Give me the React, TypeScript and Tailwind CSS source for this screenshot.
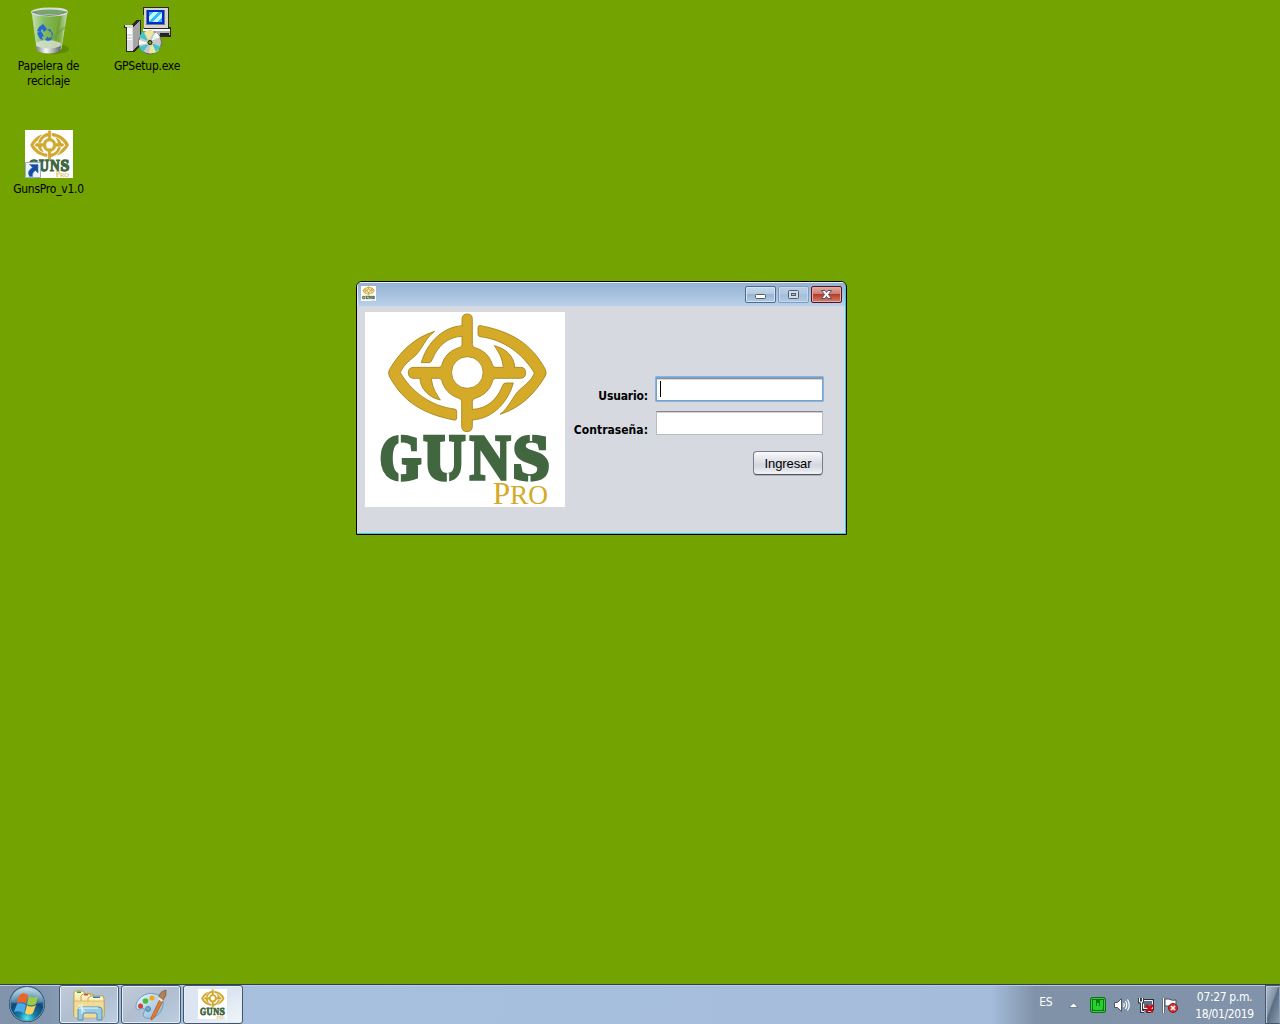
import React from "react";

const ui = "font-['DejaVu_Sans_Condensed','Noto_Sans',sans-serif]";

function Half() {
  return (
    <g>
      <path d="M224 79C196 99 186 134 165 153C143 171 129 183 121 203C154 259 212 304 284 312Q290 313 290 319V339Q290 347 282 345C190 327 130 292 88 214Q83 203 88 194C119 142 160 99 224 79Z" />
      <path d="M184 173C198 122 240 67 306 62V94C263 96 234 122 217 163Q214 173 207 173Z" />
      <path d="M180 219C180 250 205 277 241 285C224 260 217 245 214 219Z" />
    </g>
  );
}

function Logo({ className, small = false, title }: { className: string; small?: boolean; title?: string }) {
  return (
    <svg className={className} viewBox="15 21 600 585" preserveAspectRatio="none" overflow="visible" role="img" aria-label={title}>
      <rect x="15" y="21" width="600" height="585" fill="#fff" />
      <g fill="#d4aa28" stroke={small ? "#c09622" : "#a48119"} strokeWidth={small ? 6 : 2.5} strokeLinejoin="round">
        <Half />
        <g transform="rotate(180 322 203.500)"><Half /></g>
        <path fillRule="evenodd" d="M306 43Q306 27 322 27Q337 27 337 43V119Q338 126 345 128C373 136 390 154 398 181Q400 187 407 187H481Q497 187 497 203Q497 220 481 220H407Q400 220 398 227C390 255 372 272 345 280Q337 282 337 290V363Q337 380 321 380Q305 380 305 363V290Q305 282 297 280C270 271 252 253 245 226Q243 220 236 220H162Q145 220 145 203Q145 187 162 187H236Q243 187 245 181C253 153 270 136 297 128Q306 126 306 119ZM322 155A47 47 0 1 0 322 250A47 47 0 1 0 322 155Z" />
        <path stroke="none" d="M182 190h32v34h-32zM430 183h32v34h-32zM310 64h-14v28h14zM333 314h14v29h-14z" />
      </g>
      <g fill="#426740" stroke="#426740" fontFamily="'Liberation Serif',serif" fontWeight="700" fontSize="192" strokeWidth={small ? 17 : 13}>
        <text x="59" y="522" textLength="124" lengthAdjust="spacingAndGlyphs">G</text>
        <text x="191" y="522" textLength="124" lengthAdjust="spacingAndGlyphs">U</text>
        <text x="329" y="522" textLength="122" lengthAdjust="spacingAndGlyphs" strokeWidth={small ? 14 : 10}>N</text>
        <text x="458" y="522" textLength="110" lengthAdjust="spacingAndGlyphs">S</text>
      </g>
      {!small && (
        <g stroke="#fff" strokeWidth="7" fill="none">
          <path d="M119 384V418M119 500V536M264 505V536M513 384V408M508 512V536" />
        </g>
      )}
      <text x="398" y="597" fill="#d4aa28" fontFamily="'Liberation Serif',serif" fontSize={small ? 98 : 94}>P<tspan fontSize="82">RO</tspan></text>
    </svg>
  );
}

function RecycleBin() {
  return (
    <svg className="h-12 w-12" viewBox="0 0 48 48">
      <defs>
        <linearGradient id="bin"><stop stopColor="#d4ecd0" stopOpacity=".85" /><stop offset=".35" stopColor="#8ac078" stopOpacity=".8" /><stop offset=".75" stopColor="#79ad4c" stopOpacity=".7" /><stop offset="1" stopColor="#c8dfbb" stopOpacity=".9" /></linearGradient>
        <linearGradient id="base"><stop stopColor="#777e80" /><stop offset=".4" stopColor="#f9fafa" /><stop offset="1" stopColor="#5a6369" /></linearGradient>
      </defs>
      <ellipse cx="29" cy="42" rx="15" ry="5" fill="#477200" opacity=".5" />
      <path d="M7 5L12 42Q24 48 36 42L42 5Z" fill="url(#bin)" stroke="#c8dec0" strokeWidth=".7" />
      <path d="M40 20L24 34M36 8L29 40" stroke="#629747" strokeWidth="2" opacity=".5" />
      <path d="M11 36Q22 30 36 36L35 42Q24 46 12 42Z" fill="#dce2da" opacity=".8" />
      <path d="M11 39Q23 44 36 39L35 44Q24 49 12 44Z" fill="url(#base)" />
      <ellipse cx="24.500" cy="5" rx="17.500" ry="3.500" fill="#77a766" stroke="#d8dedc" strokeWidth="1.800" />
      <path d="M7 5Q24 12 42 5" fill="none" stroke="#65716d" strokeWidth=".8" />
      <path fill="#2568d2" d="M14 20l4-3 4 5-3 3-2-3-2 3-3-1zM12 26l4-2 3 5-2 1 1 3-3-1zM20 33l3-4v2l4-1-1-5-4-2 3-1 3 5-2 6-3 1z" />
    </svg>
  );
}

function SetupIcon() {
  return (
    <svg className="h-12 w-12" viewBox="0 0 48 48" shapeRendering="crispEdges">
      <path d="M20 0h26v20h2v10H22z" fill="#292929" />
      <path d="M21 1h24v20H21z" fill="#d5d5d3" /><path d="M23 3h19v15H23z" fill="#77777c" /><path d="M24 3h17v14H24z" fill="#002bc8" />
      <path d="M26 5h13v10H26z" fill="#35b8f5" /><path d="M30 5h5l-9 9V9zM38 6l1-1v5l-5 5h-4z" fill="#bff6ff" />
      <path d="M20 22h27v2H20z" fill="#fafafa" /><path d="M22 24h25v4H22z" fill="#b2b0b0" /><path d="M37 26h9v2h-9z" fill="#222" />
      <path d="M1 18h7l5-5h5v25l-7 7H3V21H1z" fill="#292929" /><path d="M2 18h8v26H4V20H2z" fill="#dedede" /><path d="M4 21h5v6H4zM4 29h5v1H4zM4 32h5v1H4z" fill="#fff" /><path d="M10 20l7-6v22l-7 7z" fill="#a5a5a5" />
      <g shapeRendering="auto">
        <circle cx="27" cy="35.500" r="11.500" fill="#c5c9c7" stroke="#666" />
        <path d="M26 34L21 25Q27 22 31 24zM28 37l8 6Q32 47 26 46z" fill="#eee7a0" /><path d="M25 34l-9-4 4-6zM29 36l9 4-5 5zM26 37l-6 8-4-5z" fill="#41c5ca" /><path d="M28 34l5-9 4 5zM25 36l-9 2v-5z" fill="#fff" />
        <circle cx="27" cy="35.500" r="3" fill="#111" stroke="#ddd" /><circle cx="27" cy="35.500" r="1.500" fill="#75a300" />
      </g>
    </svg>
  );
}

function Shortcut() {
  return <svg className="absolute bottom-0 left-0 h-4 w-4" viewBox="0 0 16 16"><path d="M.5.5h15v15H.5z" fill="#edf2f8" stroke="#99aeca" /><path d="M4.500 2.500H13V11L10.500 8.500Q7 10 7.500 14.500H4.500Q1.500 9 7.500 5.500Z" fill="#174c9b" stroke="#397ac4" strokeWidth=".6" /></svg>;
}

function Orb() {
  return (
    <svg className="h-10 w-10" viewBox="0 0 40 40">
      <defs>
        <radialGradient id="orb" cx="50%" cy="92%" r="82%"><stop stopColor="#55eaf7" /><stop offset=".3" stopColor="#16799f" /><stop offset=".67" stopColor="#124676" /><stop offset="1" stopColor="#669ac0" /></radialGradient>
        <linearGradient id="gloss" x2="0" y2="1"><stop stopColor="#e3f1f6" stopOpacity=".75" /><stop offset="1" stopColor="#8ab3ca" stopOpacity=".35" /></linearGradient>
      </defs>
      <circle cx="20" cy="19" r="18" fill="#1c405e" /><circle cx="20" cy="19" r="17" fill="url(#orb)" stroke="#6a9bb8" />
      <path d="M4 17Q5 4 20 2Q35 4 36 17Q20 23 4 17Z" fill="url(#gloss)" />
      <path d="M14 9Q17 7 21 10L19 18Q14 16 10 18Q11 11 14 9Z" fill="#ed6428" /><path d="M22 11Q26 14 31 11L29 19Q24 22 20 19Z" fill="#9bcc47" /><path d="M10 19Q14 17 19 20L17 28Q12 25 7 27Z" fill="#4daae9" /><path d="M20 20Q24 23 29 20L26 28Q22 31 18 28Z" fill="#ffd05e" />
    </svg>
  );
}

function Explorer() {
  return (
    <svg className="h-8 w-8" viewBox="0 0 32 32">
      <defs><linearGradient id="folder" x2="0" y2="1"><stop stopColor="#fff8cf" /><stop offset="1" stopColor="#e7c66b" /></linearGradient></defs>
      <path d="M1 27V4Q1 2 3 2H10L12 5H20V28H3Z" fill="url(#folder)" stroke="#b99235" strokeWidth=".8" /><path d="M8 27V7L10 5H17L19 8H25V28H9Z" fill="url(#folder)" stroke="#b99235" strokeWidth=".8" /><path d="M15 27V9L18 7H30L31 10V28H17Z" fill="url(#folder)" stroke="#b99235" strokeWidth=".8" />
      <path d="M4 2.500h4V4H4z" fill="#14ad37" /><path d="M11 5h4v1.500h-4z" fill="#db4a25" /><path d="M20 7.500h7V9h-7z" fill="#287cca" />
      <path d="M1 12H31V27Q31 29 29 29H3Q1 29 1 27Z" fill="#f0dc98" stroke="#c7a34b" strokeWidth=".6" />
      <path d="M5 31V21Q5 18 8 18H26Q29 18 29 21V31H24V26Q24 24 22 24H12Q10 24 10 26V31Z" fill="#98cae5" stroke="#5590b8" />
      <path d="M5 19H25M9 15V25M6 16L12 23" stroke="#eaffff" strokeWidth="1" />
    </svg>
  );
}

function Paint() {
  return (
    <svg className="h-8 w-8" viewBox="0 0 32 32">
      <defs><linearGradient id="palette" x2="1" y2="1"><stop stopColor="#eaf9ff" /><stop offset="1" stopColor="#85b4d4" /></linearGradient></defs>
      <path d="M1 19C0 10 11 2 20 5C29 7 30 14 26 22C22 29 12 31 9 28C6 24 13 21 8 19C5 18 3 23 1 19Z" fill="url(#palette)" stroke="#6d9dbd" />
      <circle cx="5.500" cy="17" r="2.500" fill="#d73c35" /><circle cx="10.500" cy="12" r="2.800" fill="#4dba37" /><circle cx="17" cy="9" r="2.600" fill="#f3a622" /><circle cx="13" cy="20" r="2.500" fill="#71a8cc" stroke="#4d8aad" />
      <path d="M16 29L25 10L28 12L19 29L16 31Z" fill="#e47b29" stroke="#b35220" strokeWidth=".7" /><path d="M24 8Q24 3 31 1Q32 7 28 11Z" fill="#b18057" stroke="#7d5538" strokeWidth=".7" /><path d="M24 8l4 3-1 2-4-3z" fill="#e3e9ec" />
    </svg>
  );
}

function TaskButton({ children, active = false }: { children: React.ReactNode; active?: boolean }) {
  return <div className={`flex h-[39px] w-[60px] items-center justify-center rounded-[3px] border border-[#45566a] bg-gradient-to-br shadow-[inset_0_0_0_1px_#e3edf8] ${active ? "from-[#dde6f0] via-[#dbe5f1] to-[#f2f6fa]" : "from-[#c2ccd8] via-[#afbed0] to-[#bdcfe4]"}`}>{children}</div>;
}

function WindowControl({ kind }: { kind: "min" | "max" | "close" }) {
  return (
    <button className={`flex h-[17px] w-[31px] items-center justify-center rounded-[2px] border ${kind === "close" ? "border-[#511423] bg-[linear-gradient(#e0aaa2_0%,#cd7d70_45%,#b63c29_50%,#d28070_100%)] shadow-[inset_0_0_0_1px_#e7aaa3]" : kind === "max" ? "border-[#809dbd] bg-[linear-gradient(#b9cee4_0%,#b1c8e0_45%,#a3bfdb_50%,#b0c9e3_100%)] shadow-[inset_0_0_0_1px_#c5d9ee]" : "border-[#536b8a] bg-[linear-gradient(#c5d8eb_0%,#b5cce3_45%,#98b5d3_50%,#b2cbe5_100%)] shadow-[inset_0_0_0_1px_#d2e3f4]"}`}>
      <svg className="h-[13px] w-[15px]" viewBox="0 0 15 13">
        {kind === "min" && <rect x="2.500" y="6.500" width="10" height="4" rx="1" fill="#fff" stroke="#535865" />}
        {kind === "max" && <><rect x="2.500" y="2.500" width="10" height="8" rx="1" fill="#d5dbe2" stroke="#535d70" /><rect x="5.500" y="5.500" width="4" height="2" fill="#9bb8d7" stroke="#535d70" /></>}
        {kind === "close" && <path d="M2.500 2.500h3.500l1.500 2 1.500-2h3.500L9.500 6.500l3 4H9l-1.500-2-1.500 2H2.500l3-4z" fill="#f8f8f8" stroke="#535666" />}
      </svg>
    </button>
  );
}

function Tray() {
  return (
    <>
      <svg className="mt-4 h-2 w-[11px]" viewBox="0 0 11 8"><path d="M1 6.500L5.500 2L10 6.500Z" fill="#fff" stroke="#536275" strokeWidth=".7" /></svg>
      <svg className="ml-[11px] mt-3 h-4 w-4" viewBox="0 0 16 16"><rect x=".5" y=".5" width="15" height="15" rx="2" fill="#0b7a13" stroke="#087610" /><rect x="1.500" y="1.500" width="13" height="13" rx="1" fill="none" stroke="#4bc04a" /><path d="M3 3h3v6h1V6h2v3h1V3h3v9l-1 1H4l-1-1z" fill="#22d32f" /></svg>
      <svg className="ml-2 mt-3 h-4 w-4" viewBox="0 0 16 16" fill="none"><path d="M.5 5.500H3.500L7.500 1.500V14.500L3.500 10.500H.5Z" fill="#fff" stroke="#4b5563" /><path d="M9.500 6Q11 8 9.500 10M11.500 4Q14 8 11.500 12M13.500 2.500Q17 8 13.500 13.500" stroke="#fff" strokeWidth="1.200" /></svg>
      <svg className="ml-2 mt-3 h-[17px] w-4" viewBox="0 0 16 17"><path d="M5.500 3.500h9v8h-9zM8 14.500h5" fill="#617084" stroke="#252f3b" strokeWidth="3" /><path d="M5.500 3.500h9v8h-9zM8 14.500h5" fill="#617084" stroke="#f3f5f7" /><path d="M1.500 1v4h3V1M3.500 5v9.500H6" fill="none" stroke="#333d49" strokeWidth="3" /><path d="M1.500 1v4h3V1M3.500 5v9.500H6" fill="none" stroke="#fff" /><path d="M8 8l7 7M15 8l-7 7" stroke="#d50b14" strokeWidth="2.500" /></svg>
      <svg className="ml-2 mt-3 h-[17px] w-4" viewBox="0 0 16 17"><path d="M1.500 1v15" stroke="#354353" strokeWidth="3" /><path d="M1.500 1v15" stroke="#fff" strokeWidth="1.500" /><path d="M3 2h4q3 2 7 1v7q-4 1-7-1H3z" fill="#f7f9fa" stroke="#465364" /><circle cx="11" cy="11" r="4.500" fill="#d73733" stroke="#8d1114" /><path d="M9 9l4 4M13 9l-4 4" stroke="#fff" strokeWidth="1.600" /></svg>
    </>
  );
}

export default function App() {
  return (
    <main className={`relative flex h-[1024px] w-[1280px] flex-col overflow-hidden bg-[#72a300] text-black ${ui}`}>
      <section className="relative flex-1">
        <div className="absolute left-0 top-[7px] flex w-[97px] flex-col items-center"><RecycleBin /><div className="mt-1 text-center text-[12px] leading-[15px] tracking-[-.2px]">Papelera de<br />reciclaje</div></div>
        <div className="absolute left-[98px] top-[7px] flex w-[98px] flex-col items-center"><SetupIcon /><span className="mt-1 text-[12px] leading-[15px] tracking-[-.25px]">GPSetup.exe</span></div>
        <div className="absolute left-0 top-[130px] flex w-[97px] flex-col items-center"><div className="relative"><Logo small className="h-12 w-12" /><Shortcut /></div><span className="mt-1 whitespace-nowrap text-[12px] leading-[15px] tracking-[-.25px]">GunsPro_v1.0</span></div>

        <div className="absolute left-[356px] top-[281px] flex h-[254px] w-[491px] flex-col overflow-hidden rounded-t-[6px] border border-black bg-[#d6d9e0] shadow-[inset_-1px_-1px_0_#37c9e7]">
          <header className="mr-px flex h-6 shrink-0 items-start justify-between border-l border-t border-[#e4edf7] bg-gradient-to-b from-[#95b2d2] to-[#b9d0ea] pl-[3px] pr-[3px] pt-[3px]">
            <Logo small className="h-[15px] w-[15px]" />
            <div className="flex gap-[2px]"><WindowControl kind="min" /><WindowControl kind="max" /><WindowControl kind="close" /></div>
          </header>
          <div className="flex pl-2 pt-[6px]">
            <Logo className="h-[195px] w-[200px] shrink-0" title="Guns Pro" />
            <form className="flex w-[259px] flex-col pt-16" onSubmit={(e) => e.preventDefault()}>
              <div className="flex h-[27px] items-start justify-end"><label className="mr-[7px] mt-[13px] text-[12px] font-bold leading-[15px] tracking-[-.15px]">Usuario:</label><div className="h-[26px] w-[169px] rounded-[1px] border border-[#8db1d7] bg-white shadow-[inset_0_0_0_1px_#73a4d1,inset_0_2px_0_#8d9199,inset_0_3px_0_#d4d6d9]"><div className="ml-1 mt-1 h-4 w-px bg-black" /></div></div>
              <div className="mt-2 flex h-6 items-start justify-end"><label className="mr-[8px] mt-[12px] text-[12px] font-bold leading-[15px] tracking-[.03px]">Contraseña:</label><div className="mr-px h-6 w-[167px] border border-[#b7bbc2] border-t-[#85878c] bg-white shadow-[inset_0_1px_0_#d0d2d6]" /></div>
              <button className="mr-px mt-4 flex h-[24px] w-[70px] items-center justify-center self-end rounded-[4px] border border-[#777c86] border-b-[#50545d] bg-gradient-to-b from-[#fafafc] via-[#d3d6de] via-60% to-[#f1f2f6] pt-px font-['Liberation_Sans',sans-serif] text-[13px] leading-4 tracking-[-.1px] shadow-[0_1px_0_#b0b3ba]">Ingresar</button>
            </form>
          </div>
        </div>
      </section>

      <footer className="flex h-10 shrink-0 border-t border-[#303e4d] bg-[linear-gradient(90deg,#8193aa_0px,#8397b0_50px,#a4bddb_130px,#a7c0dd_280px,#a5bddb_990px,#8092a8_1035px,#8193aa_1280px)] shadow-[inset_0_1px_0_#b8cbdf]">
        <div className="flex w-[59px] justify-center pr-[5px]"><Orb /></div>
        <div className="flex gap-[2px]"><TaskButton><Explorer /></TaskButton><TaskButton><Paint /></TaskButton><TaskButton active><Logo small className="mr-[2px] mb-px h-[30px] w-[29px]" /></TaskButton></div>
        <div className="ml-auto flex text-white">
          <span className="mr-4 mt-[9px] text-[12px] leading-4 tracking-[-.5px]">ES</span><Tray />
          <div className="ml-[10px] flex w-[73px] flex-col pt-1 text-center text-[12px] leading-[17px] tracking-[-.35px] whitespace-nowrap"><span>07:27 p.m.</span><span>18/01/2019</span></div>
          <div className="ml-1 h-[39px] w-[15px] border border-[#45576b] border-r-[#91a4b7] bg-[linear-gradient(110deg,#b2bfcb_0%,#8394a5_45%,#586e85_50%,#8b9cae_100%)] shadow-[inset_1px_1px_0_#b8c8d8]" />
        </div>
      </footer>
    </main>
  );
}
